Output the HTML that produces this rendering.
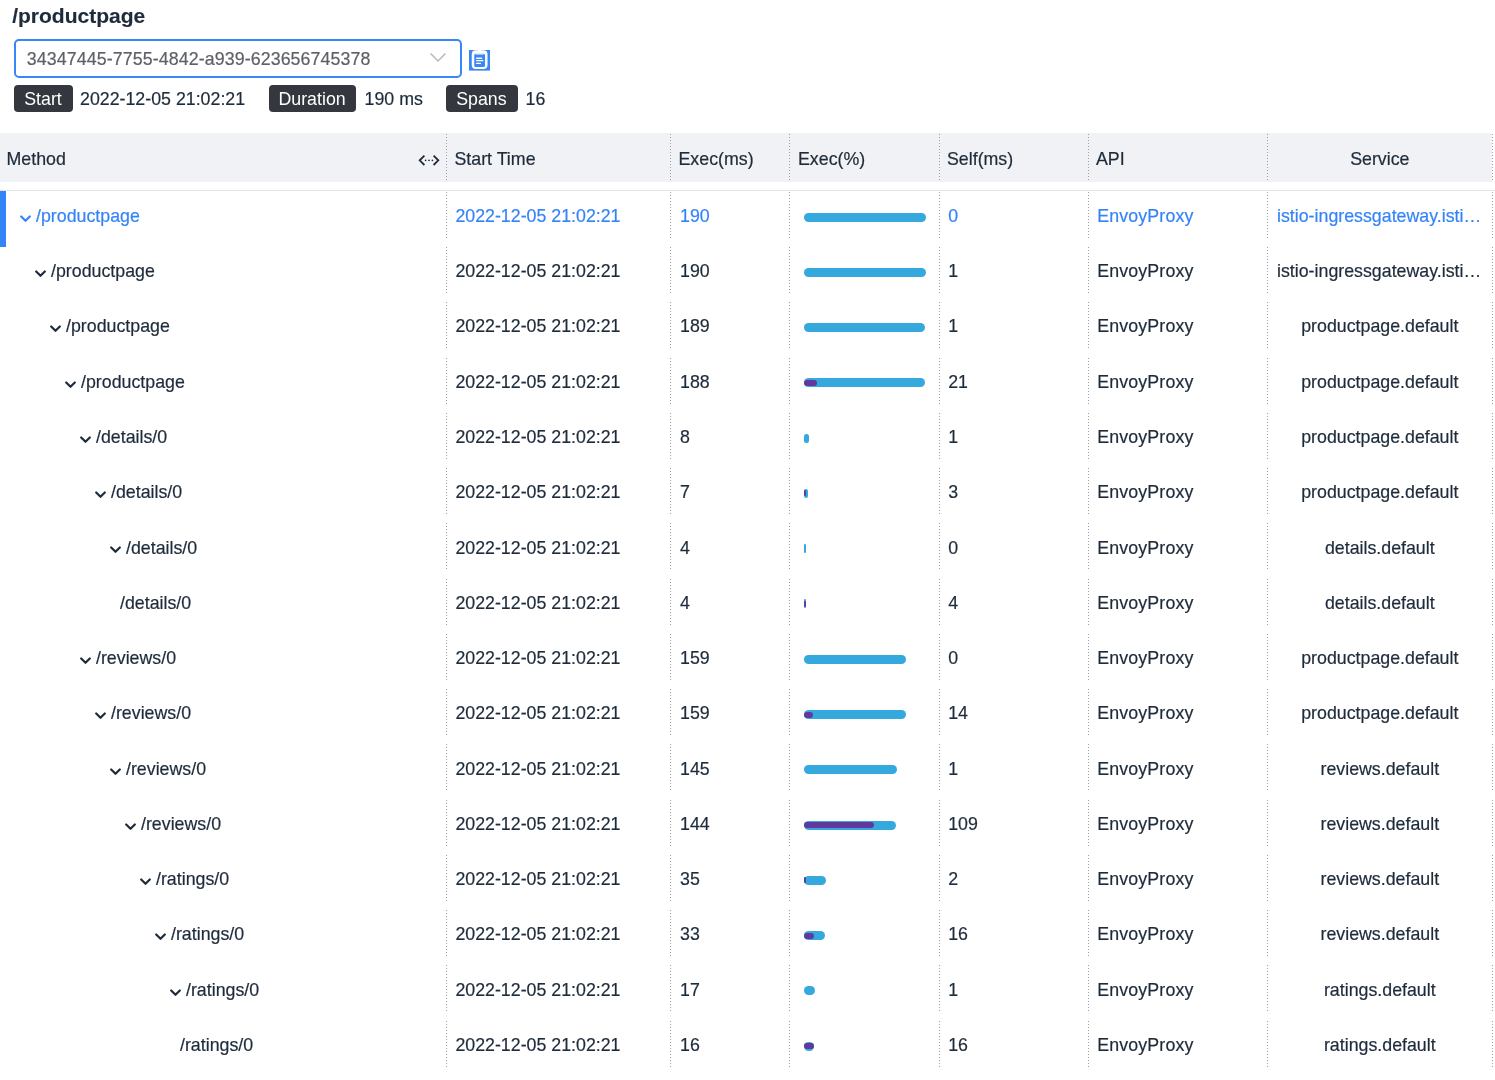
<!DOCTYPE html>
<html><head><meta charset="utf-8"><title>trace</title><style>
*{margin:0;padding:0;box-sizing:border-box}
html,body{-webkit-font-smoothing:antialiased;width:1495px;height:1080px;overflow:hidden;background:#fff;font-family:"Liberation Sans",sans-serif;color:#1d2b3a}
.a{position:absolute;white-space:nowrap}
.t{position:absolute;white-space:nowrap;font-size:17.8px;line-height:20px;-webkit-text-stroke:0.2px currentColor}
.title{position:absolute;left:12.2px;top:4.4px;-webkit-text-stroke:0.15px currentColor;font-size:21px;font-weight:bold;line-height:24px}
.sel{position:absolute;left:14px;top:39px;width:447.5px;height:38.7px;border:2px solid #3a86f6;border-radius:5px;background:#fff}
.tag{position:absolute;top:85.3px;height:26.9px;background:#34383e;border-radius:4px;color:#fff;font-size:17.8px;line-height:28.6px;text-align:center;text-indent:-1px}
.hdr{position:absolute;left:0;top:133.2px;width:1492px;height:49.3px;background:#f0f2f6}
.hline{position:absolute;left:0;top:189.7px;width:1495px;height:1.4px;background:#e2e4e9}
.sep{position:absolute;width:1px;background:repeating-linear-gradient(to bottom,#9c9fa6 0 1px,transparent 1px 3px)}
.bar{position:absolute;height:9px;border-radius:4.5px;background:#35a8de}
.pur{position:absolute;height:6px;border-radius:3px;background:#62389e}
.chev{position:absolute;width:11px;height:8px}
</style></head>
<body><div id="w" style="position:absolute;left:0;top:0;width:1495px;height:1080px;will-change:transform">
<div class="title">/productpage</div>
<div class="sel"></div>
<div class="t" style="left:26.80px;top:48.50px;color:#5e6068;letter-spacing:0.1px">34347445-7755-4842-a939-623656745378</div>
<svg class="a" style="left:429px;top:52px" width="18" height="11" viewBox="0 0 18 11"><path d="M1.6 1.4 L9 9 L16.4 1.4" fill="none" stroke="#b4b7bd" stroke-width="1.5"/></svg>
<svg class="a" style="left:469px;top:50px" width="21" height="21" viewBox="0 0 21 21"><rect x="0" y="0" width="21" height="20.6" fill="#3a86f6"/><path fill="#fff" fill-rule="evenodd" d="M6.5 0.3 H14.5 A4 4 0 0 1 18.5 4.3 V15 A4 4 0 0 1 14.5 19 H6.75 A4 4 0 0 1 2.75 15 V4.3 A4 4 0 0 1 6.5 0.3 Z M6.75 3.75 H14.5 A1.5 1.5 0 0 1 16 5.25 V15.5 A1.5 1.5 0 0 1 14.5 17 H6.75 A1.5 1.5 0 0 1 5.25 15.5 V5.25 A1.5 1.5 0 0 1 6.75 3.75 Z"/><rect x="9" y="0" width="3.25" height="1.2" fill="#fff"/><rect x="6.6" y="3.6" width="8" height="0.9" fill="#fff"/><rect x="7" y="7.5" width="6.25" height="1.5" rx="0.7" fill="#fff"/><rect x="7" y="10" width="7.5" height="1.3" rx="0.6" fill="#fff"/><rect x="7" y="12.75" width="5" height="1.3" rx="0.6" fill="#fff"/></svg>
<div class="tag" style="left:14.2px;width:58.7px">Start</div>
<div class="t" style="left:80.00px;top:88.90px;">2022-12-05 21:02:21</div>
<div class="tag" style="left:268.7px;width:87.8px">Duration</div>
<div class="t" style="left:364.60px;top:88.90px;">190 ms</div>
<div class="tag" style="left:446px;width:71.8px">Spans</div>
<div class="t" style="left:525.50px;top:88.90px;">16</div>
<div class="hdr"></div>
<div class="hline"></div>
<div class="t" style="left:6.50px;top:148.80px;">Method</div>
<svg class="a" style="left:418px;top:154px" width="22" height="13" viewBox="0 0 22 13"><path d="M6.4 1.6 L1.7 6.3 L6.4 11 M15.6 1.6 L20.3 6.3 L15.6 11" fill="none" stroke="#1d2b3a" stroke-width="1.8"/><circle cx="7.6" cy="6.3" r="0.85" fill="#1d2b3a"/><circle cx="11" cy="6.3" r="0.85" fill="#1d2b3a"/><circle cx="14.4" cy="6.3" r="0.85" fill="#1d2b3a"/></svg>
<div class="t" style="left:454.50px;top:148.80px;">Start Time</div>
<div class="t" style="left:678.50px;top:148.80px;">Exec(ms)</div>
<div class="t" style="left:798.00px;top:148.80px;">Exec(%)</div>
<div class="t" style="left:947.00px;top:148.80px;">Self(ms)</div>
<div class="t" style="left:1096.00px;top:148.80px;">API</div>
<div class="t" style="left:1267.5px;width:224.6px;text-align:center;top:148.80px">Service</div>
<div class="sep" style="left:445.50px;top:134px;height:48px"></div>
<div class="sep" style="left:669.60px;top:134px;height:48px"></div>
<div class="sep" style="left:789.20px;top:134px;height:48px"></div>
<div class="sep" style="left:938.50px;top:134px;height:48px"></div>
<div class="sep" style="left:1088.10px;top:134px;height:48px"></div>
<div class="sep" style="left:1267.00px;top:134px;height:48px"></div>
<div class="sep" style="left:1491.60px;top:134px;height:48px"></div>
<div class="a" style="left:0;top:191.00px;width:6px;height:55.5px;background:#3584f7"></div>
<svg class="chev" style="left:20.00px;top:214.80px" viewBox="0 0 11 8"><path d="M1.2 1.5 L5.5 5.8 L9.8 1.5" fill="none" stroke="#3584f7" stroke-width="2.2" stroke-linejoin="round" stroke-linecap="round"/></svg>
<div class="t" style="left:36.00px;top:205.90px;color:#3584f7">/productpage</div>
<div class="t" style="left:455.40px;top:205.90px;color:#3584f7">2022-12-05 21:02:21</div>
<div class="t" style="left:680.00px;top:205.90px;color:#3584f7">190</div>
<div class="t" style="left:948.20px;top:205.90px;color:#3584f7">0</div>
<div class="t" style="left:1097.20px;top:205.90px;color:#3584f7;letter-spacing:0.15px">EnvoyProxy</div>
<div class="t" style="left:1277.00px;top:205.90px;color:#3584f7">istio-ingressgateway.isti…</div>
<div class="bar" style="left:803.7px;top:212.60px;width:122.40px"></div>
<div class="sep" style="left:445.50px;top:191.70px;height:47.5px"></div>
<div class="sep" style="left:669.60px;top:191.70px;height:47.5px"></div>
<div class="sep" style="left:789.20px;top:191.70px;height:47.5px"></div>
<div class="sep" style="left:938.50px;top:191.70px;height:47.5px"></div>
<div class="sep" style="left:1088.10px;top:191.70px;height:47.5px"></div>
<div class="sep" style="left:1267.00px;top:191.70px;height:47.5px"></div>
<div class="sep" style="left:1491.60px;top:191.70px;height:47.5px"></div>
<svg class="chev" style="left:35.00px;top:270.07px" viewBox="0 0 11 8"><path d="M1.2 1.5 L5.5 5.8 L9.8 1.5" fill="none" stroke="#1d2b3a" stroke-width="2.2" stroke-linejoin="round" stroke-linecap="round"/></svg>
<div class="t" style="left:51.00px;top:261.17px;color:#1d2b3a">/productpage</div>
<div class="t" style="left:455.40px;top:261.17px;color:#1d2b3a">2022-12-05 21:02:21</div>
<div class="t" style="left:680.00px;top:261.17px;color:#1d2b3a">190</div>
<div class="t" style="left:948.20px;top:261.17px;color:#1d2b3a">1</div>
<div class="t" style="left:1097.20px;top:261.17px;color:#1d2b3a;letter-spacing:0.15px">EnvoyProxy</div>
<div class="t" style="left:1277.00px;top:261.17px;color:#1d2b3a">istio-ingressgateway.isti…</div>
<div class="bar" style="left:803.7px;top:267.87px;width:122.40px"></div>
<div class="sep" style="left:445.50px;top:246.97px;height:47.5px"></div>
<div class="sep" style="left:669.60px;top:246.97px;height:47.5px"></div>
<div class="sep" style="left:789.20px;top:246.97px;height:47.5px"></div>
<div class="sep" style="left:938.50px;top:246.97px;height:47.5px"></div>
<div class="sep" style="left:1088.10px;top:246.97px;height:47.5px"></div>
<div class="sep" style="left:1267.00px;top:246.97px;height:47.5px"></div>
<div class="sep" style="left:1491.60px;top:246.97px;height:47.5px"></div>
<svg class="chev" style="left:50.00px;top:325.34px" viewBox="0 0 11 8"><path d="M1.2 1.5 L5.5 5.8 L9.8 1.5" fill="none" stroke="#1d2b3a" stroke-width="2.2" stroke-linejoin="round" stroke-linecap="round"/></svg>
<div class="t" style="left:66.00px;top:316.44px;color:#1d2b3a">/productpage</div>
<div class="t" style="left:455.40px;top:316.44px;color:#1d2b3a">2022-12-05 21:02:21</div>
<div class="t" style="left:680.00px;top:316.44px;color:#1d2b3a">189</div>
<div class="t" style="left:948.20px;top:316.44px;color:#1d2b3a">1</div>
<div class="t" style="left:1097.20px;top:316.44px;color:#1d2b3a;letter-spacing:0.15px">EnvoyProxy</div>
<div class="t" style="left:1267.5px;width:224.6px;text-align:center;top:316.44px;color:#1d2b3a">productpage.default</div>
<div class="bar" style="left:803.7px;top:323.14px;width:121.76px"></div>
<div class="sep" style="left:445.50px;top:302.24px;height:47.5px"></div>
<div class="sep" style="left:669.60px;top:302.24px;height:47.5px"></div>
<div class="sep" style="left:789.20px;top:302.24px;height:47.5px"></div>
<div class="sep" style="left:938.50px;top:302.24px;height:47.5px"></div>
<div class="sep" style="left:1088.10px;top:302.24px;height:47.5px"></div>
<div class="sep" style="left:1267.00px;top:302.24px;height:47.5px"></div>
<div class="sep" style="left:1491.60px;top:302.24px;height:47.5px"></div>
<svg class="chev" style="left:65.00px;top:380.61px" viewBox="0 0 11 8"><path d="M1.2 1.5 L5.5 5.8 L9.8 1.5" fill="none" stroke="#1d2b3a" stroke-width="2.2" stroke-linejoin="round" stroke-linecap="round"/></svg>
<div class="t" style="left:81.00px;top:371.71px;color:#1d2b3a">/productpage</div>
<div class="t" style="left:455.40px;top:371.71px;color:#1d2b3a">2022-12-05 21:02:21</div>
<div class="t" style="left:680.00px;top:371.71px;color:#1d2b3a">188</div>
<div class="t" style="left:948.20px;top:371.71px;color:#1d2b3a">21</div>
<div class="t" style="left:1097.20px;top:371.71px;color:#1d2b3a;letter-spacing:0.15px">EnvoyProxy</div>
<div class="t" style="left:1267.5px;width:224.6px;text-align:center;top:371.71px;color:#1d2b3a">productpage.default</div>
<div class="bar" style="left:803.7px;top:378.41px;width:121.11px"></div>
<div class="pur" style="left:803.7px;top:379.91px;width:13.53px"></div>
<div class="sep" style="left:445.50px;top:357.51px;height:47.5px"></div>
<div class="sep" style="left:669.60px;top:357.51px;height:47.5px"></div>
<div class="sep" style="left:789.20px;top:357.51px;height:47.5px"></div>
<div class="sep" style="left:938.50px;top:357.51px;height:47.5px"></div>
<div class="sep" style="left:1088.10px;top:357.51px;height:47.5px"></div>
<div class="sep" style="left:1267.00px;top:357.51px;height:47.5px"></div>
<div class="sep" style="left:1491.60px;top:357.51px;height:47.5px"></div>
<svg class="chev" style="left:80.00px;top:435.88px" viewBox="0 0 11 8"><path d="M1.2 1.5 L5.5 5.8 L9.8 1.5" fill="none" stroke="#1d2b3a" stroke-width="2.2" stroke-linejoin="round" stroke-linecap="round"/></svg>
<div class="t" style="left:96.00px;top:426.98px;color:#1d2b3a">/details/0</div>
<div class="t" style="left:455.40px;top:426.98px;color:#1d2b3a">2022-12-05 21:02:21</div>
<div class="t" style="left:680.00px;top:426.98px;color:#1d2b3a">8</div>
<div class="t" style="left:948.20px;top:426.98px;color:#1d2b3a">1</div>
<div class="t" style="left:1097.20px;top:426.98px;color:#1d2b3a;letter-spacing:0.15px">EnvoyProxy</div>
<div class="t" style="left:1267.5px;width:224.6px;text-align:center;top:426.98px;color:#1d2b3a">productpage.default</div>
<div class="bar" style="left:803.7px;top:433.68px;width:5.15px"></div>
<div class="sep" style="left:445.50px;top:412.78px;height:47.5px"></div>
<div class="sep" style="left:669.60px;top:412.78px;height:47.5px"></div>
<div class="sep" style="left:789.20px;top:412.78px;height:47.5px"></div>
<div class="sep" style="left:938.50px;top:412.78px;height:47.5px"></div>
<div class="sep" style="left:1088.10px;top:412.78px;height:47.5px"></div>
<div class="sep" style="left:1267.00px;top:412.78px;height:47.5px"></div>
<div class="sep" style="left:1491.60px;top:412.78px;height:47.5px"></div>
<svg class="chev" style="left:95.00px;top:491.15px" viewBox="0 0 11 8"><path d="M1.2 1.5 L5.5 5.8 L9.8 1.5" fill="none" stroke="#1d2b3a" stroke-width="2.2" stroke-linejoin="round" stroke-linecap="round"/></svg>
<div class="t" style="left:111.00px;top:482.25px;color:#1d2b3a">/details/0</div>
<div class="t" style="left:455.40px;top:482.25px;color:#1d2b3a">2022-12-05 21:02:21</div>
<div class="t" style="left:680.00px;top:482.25px;color:#1d2b3a">7</div>
<div class="t" style="left:948.20px;top:482.25px;color:#1d2b3a">3</div>
<div class="t" style="left:1097.20px;top:482.25px;color:#1d2b3a;letter-spacing:0.15px">EnvoyProxy</div>
<div class="t" style="left:1267.5px;width:224.6px;text-align:center;top:482.25px;color:#1d2b3a">productpage.default</div>
<div class="bar" style="left:803.7px;top:488.95px;width:4.51px"></div>
<div class="pur" style="left:803.7px;top:490.45px;width:2.50px"></div>
<div class="sep" style="left:445.50px;top:468.05px;height:47.5px"></div>
<div class="sep" style="left:669.60px;top:468.05px;height:47.5px"></div>
<div class="sep" style="left:789.20px;top:468.05px;height:47.5px"></div>
<div class="sep" style="left:938.50px;top:468.05px;height:47.5px"></div>
<div class="sep" style="left:1088.10px;top:468.05px;height:47.5px"></div>
<div class="sep" style="left:1267.00px;top:468.05px;height:47.5px"></div>
<div class="sep" style="left:1491.60px;top:468.05px;height:47.5px"></div>
<svg class="chev" style="left:110.00px;top:546.42px" viewBox="0 0 11 8"><path d="M1.2 1.5 L5.5 5.8 L9.8 1.5" fill="none" stroke="#1d2b3a" stroke-width="2.2" stroke-linejoin="round" stroke-linecap="round"/></svg>
<div class="t" style="left:126.00px;top:537.52px;color:#1d2b3a">/details/0</div>
<div class="t" style="left:455.40px;top:537.52px;color:#1d2b3a">2022-12-05 21:02:21</div>
<div class="t" style="left:680.00px;top:537.52px;color:#1d2b3a">4</div>
<div class="t" style="left:948.20px;top:537.52px;color:#1d2b3a">0</div>
<div class="t" style="left:1097.20px;top:537.52px;color:#1d2b3a;letter-spacing:0.15px">EnvoyProxy</div>
<div class="t" style="left:1267.5px;width:224.6px;text-align:center;top:537.52px;color:#1d2b3a">details.default</div>
<div class="bar" style="left:803.7px;top:544.22px;width:2.58px"></div>
<div class="sep" style="left:445.50px;top:523.32px;height:47.5px"></div>
<div class="sep" style="left:669.60px;top:523.32px;height:47.5px"></div>
<div class="sep" style="left:789.20px;top:523.32px;height:47.5px"></div>
<div class="sep" style="left:938.50px;top:523.32px;height:47.5px"></div>
<div class="sep" style="left:1088.10px;top:523.32px;height:47.5px"></div>
<div class="sep" style="left:1267.00px;top:523.32px;height:47.5px"></div>
<div class="sep" style="left:1491.60px;top:523.32px;height:47.5px"></div>
<div class="t" style="left:120.00px;top:592.79px;color:#1d2b3a">/details/0</div>
<div class="t" style="left:455.40px;top:592.79px;color:#1d2b3a">2022-12-05 21:02:21</div>
<div class="t" style="left:680.00px;top:592.79px;color:#1d2b3a">4</div>
<div class="t" style="left:948.20px;top:592.79px;color:#1d2b3a">4</div>
<div class="t" style="left:1097.20px;top:592.79px;color:#1d2b3a;letter-spacing:0.15px">EnvoyProxy</div>
<div class="t" style="left:1267.5px;width:224.6px;text-align:center;top:592.79px;color:#1d2b3a">details.default</div>
<div class="bar" style="left:803.7px;top:599.49px;width:2.58px"></div>
<div class="pur" style="left:803.7px;top:600.99px;width:2.58px"></div>
<div class="sep" style="left:445.50px;top:578.59px;height:47.5px"></div>
<div class="sep" style="left:669.60px;top:578.59px;height:47.5px"></div>
<div class="sep" style="left:789.20px;top:578.59px;height:47.5px"></div>
<div class="sep" style="left:938.50px;top:578.59px;height:47.5px"></div>
<div class="sep" style="left:1088.10px;top:578.59px;height:47.5px"></div>
<div class="sep" style="left:1267.00px;top:578.59px;height:47.5px"></div>
<div class="sep" style="left:1491.60px;top:578.59px;height:47.5px"></div>
<svg class="chev" style="left:80.00px;top:656.96px" viewBox="0 0 11 8"><path d="M1.2 1.5 L5.5 5.8 L9.8 1.5" fill="none" stroke="#1d2b3a" stroke-width="2.2" stroke-linejoin="round" stroke-linecap="round"/></svg>
<div class="t" style="left:96.00px;top:648.06px;color:#1d2b3a">/reviews/0</div>
<div class="t" style="left:455.40px;top:648.06px;color:#1d2b3a">2022-12-05 21:02:21</div>
<div class="t" style="left:680.00px;top:648.06px;color:#1d2b3a">159</div>
<div class="t" style="left:948.20px;top:648.06px;color:#1d2b3a">0</div>
<div class="t" style="left:1097.20px;top:648.06px;color:#1d2b3a;letter-spacing:0.15px">EnvoyProxy</div>
<div class="t" style="left:1267.5px;width:224.6px;text-align:center;top:648.06px;color:#1d2b3a">productpage.default</div>
<div class="bar" style="left:803.7px;top:654.76px;width:102.43px"></div>
<div class="sep" style="left:445.50px;top:633.86px;height:47.5px"></div>
<div class="sep" style="left:669.60px;top:633.86px;height:47.5px"></div>
<div class="sep" style="left:789.20px;top:633.86px;height:47.5px"></div>
<div class="sep" style="left:938.50px;top:633.86px;height:47.5px"></div>
<div class="sep" style="left:1088.10px;top:633.86px;height:47.5px"></div>
<div class="sep" style="left:1267.00px;top:633.86px;height:47.5px"></div>
<div class="sep" style="left:1491.60px;top:633.86px;height:47.5px"></div>
<svg class="chev" style="left:95.00px;top:712.23px" viewBox="0 0 11 8"><path d="M1.2 1.5 L5.5 5.8 L9.8 1.5" fill="none" stroke="#1d2b3a" stroke-width="2.2" stroke-linejoin="round" stroke-linecap="round"/></svg>
<div class="t" style="left:111.00px;top:703.33px;color:#1d2b3a">/reviews/0</div>
<div class="t" style="left:455.40px;top:703.33px;color:#1d2b3a">2022-12-05 21:02:21</div>
<div class="t" style="left:680.00px;top:703.33px;color:#1d2b3a">159</div>
<div class="t" style="left:948.20px;top:703.33px;color:#1d2b3a">14</div>
<div class="t" style="left:1097.20px;top:703.33px;color:#1d2b3a;letter-spacing:0.15px">EnvoyProxy</div>
<div class="t" style="left:1267.5px;width:224.6px;text-align:center;top:703.33px;color:#1d2b3a">productpage.default</div>
<div class="bar" style="left:803.7px;top:710.03px;width:102.43px"></div>
<div class="pur" style="left:803.7px;top:711.53px;width:9.02px"></div>
<div class="sep" style="left:445.50px;top:689.13px;height:47.5px"></div>
<div class="sep" style="left:669.60px;top:689.13px;height:47.5px"></div>
<div class="sep" style="left:789.20px;top:689.13px;height:47.5px"></div>
<div class="sep" style="left:938.50px;top:689.13px;height:47.5px"></div>
<div class="sep" style="left:1088.10px;top:689.13px;height:47.5px"></div>
<div class="sep" style="left:1267.00px;top:689.13px;height:47.5px"></div>
<div class="sep" style="left:1491.60px;top:689.13px;height:47.5px"></div>
<svg class="chev" style="left:110.00px;top:767.50px" viewBox="0 0 11 8"><path d="M1.2 1.5 L5.5 5.8 L9.8 1.5" fill="none" stroke="#1d2b3a" stroke-width="2.2" stroke-linejoin="round" stroke-linecap="round"/></svg>
<div class="t" style="left:126.00px;top:758.60px;color:#1d2b3a">/reviews/0</div>
<div class="t" style="left:455.40px;top:758.60px;color:#1d2b3a">2022-12-05 21:02:21</div>
<div class="t" style="left:680.00px;top:758.60px;color:#1d2b3a">145</div>
<div class="t" style="left:948.20px;top:758.60px;color:#1d2b3a">1</div>
<div class="t" style="left:1097.20px;top:758.60px;color:#1d2b3a;letter-spacing:0.15px">EnvoyProxy</div>
<div class="t" style="left:1267.5px;width:224.6px;text-align:center;top:758.60px;color:#1d2b3a">reviews.default</div>
<div class="bar" style="left:803.7px;top:765.30px;width:93.41px"></div>
<div class="sep" style="left:445.50px;top:744.40px;height:47.5px"></div>
<div class="sep" style="left:669.60px;top:744.40px;height:47.5px"></div>
<div class="sep" style="left:789.20px;top:744.40px;height:47.5px"></div>
<div class="sep" style="left:938.50px;top:744.40px;height:47.5px"></div>
<div class="sep" style="left:1088.10px;top:744.40px;height:47.5px"></div>
<div class="sep" style="left:1267.00px;top:744.40px;height:47.5px"></div>
<div class="sep" style="left:1491.60px;top:744.40px;height:47.5px"></div>
<svg class="chev" style="left:125.00px;top:822.77px" viewBox="0 0 11 8"><path d="M1.2 1.5 L5.5 5.8 L9.8 1.5" fill="none" stroke="#1d2b3a" stroke-width="2.2" stroke-linejoin="round" stroke-linecap="round"/></svg>
<div class="t" style="left:141.00px;top:813.87px;color:#1d2b3a">/reviews/0</div>
<div class="t" style="left:455.40px;top:813.87px;color:#1d2b3a">2022-12-05 21:02:21</div>
<div class="t" style="left:680.00px;top:813.87px;color:#1d2b3a">144</div>
<div class="t" style="left:948.20px;top:813.87px;color:#1d2b3a">109</div>
<div class="t" style="left:1097.20px;top:813.87px;color:#1d2b3a;letter-spacing:0.15px">EnvoyProxy</div>
<div class="t" style="left:1267.5px;width:224.6px;text-align:center;top:813.87px;color:#1d2b3a">reviews.default</div>
<div class="bar" style="left:803.7px;top:820.57px;width:92.77px"></div>
<div class="pur" style="left:803.7px;top:822.07px;width:70.22px"></div>
<div class="sep" style="left:445.50px;top:799.67px;height:47.5px"></div>
<div class="sep" style="left:669.60px;top:799.67px;height:47.5px"></div>
<div class="sep" style="left:789.20px;top:799.67px;height:47.5px"></div>
<div class="sep" style="left:938.50px;top:799.67px;height:47.5px"></div>
<div class="sep" style="left:1088.10px;top:799.67px;height:47.5px"></div>
<div class="sep" style="left:1267.00px;top:799.67px;height:47.5px"></div>
<div class="sep" style="left:1491.60px;top:799.67px;height:47.5px"></div>
<svg class="chev" style="left:140.00px;top:878.04px" viewBox="0 0 11 8"><path d="M1.2 1.5 L5.5 5.8 L9.8 1.5" fill="none" stroke="#1d2b3a" stroke-width="2.2" stroke-linejoin="round" stroke-linecap="round"/></svg>
<div class="t" style="left:156.00px;top:869.14px;color:#1d2b3a">/ratings/0</div>
<div class="t" style="left:455.40px;top:869.14px;color:#1d2b3a">2022-12-05 21:02:21</div>
<div class="t" style="left:680.00px;top:869.14px;color:#1d2b3a">35</div>
<div class="t" style="left:948.20px;top:869.14px;color:#1d2b3a">2</div>
<div class="t" style="left:1097.20px;top:869.14px;color:#1d2b3a;letter-spacing:0.15px">EnvoyProxy</div>
<div class="t" style="left:1267.5px;width:224.6px;text-align:center;top:869.14px;color:#1d2b3a">reviews.default</div>
<div class="bar" style="left:803.7px;top:875.84px;width:22.55px"></div>
<div class="pur" style="left:803.7px;top:877.34px;width:2.50px"></div>
<div class="sep" style="left:445.50px;top:854.94px;height:47.5px"></div>
<div class="sep" style="left:669.60px;top:854.94px;height:47.5px"></div>
<div class="sep" style="left:789.20px;top:854.94px;height:47.5px"></div>
<div class="sep" style="left:938.50px;top:854.94px;height:47.5px"></div>
<div class="sep" style="left:1088.10px;top:854.94px;height:47.5px"></div>
<div class="sep" style="left:1267.00px;top:854.94px;height:47.5px"></div>
<div class="sep" style="left:1491.60px;top:854.94px;height:47.5px"></div>
<svg class="chev" style="left:155.00px;top:933.31px" viewBox="0 0 11 8"><path d="M1.2 1.5 L5.5 5.8 L9.8 1.5" fill="none" stroke="#1d2b3a" stroke-width="2.2" stroke-linejoin="round" stroke-linecap="round"/></svg>
<div class="t" style="left:171.00px;top:924.41px;color:#1d2b3a">/ratings/0</div>
<div class="t" style="left:455.40px;top:924.41px;color:#1d2b3a">2022-12-05 21:02:21</div>
<div class="t" style="left:680.00px;top:924.41px;color:#1d2b3a">33</div>
<div class="t" style="left:948.20px;top:924.41px;color:#1d2b3a">16</div>
<div class="t" style="left:1097.20px;top:924.41px;color:#1d2b3a;letter-spacing:0.15px">EnvoyProxy</div>
<div class="t" style="left:1267.5px;width:224.6px;text-align:center;top:924.41px;color:#1d2b3a">reviews.default</div>
<div class="bar" style="left:803.7px;top:931.11px;width:21.26px"></div>
<div class="pur" style="left:803.7px;top:932.61px;width:10.31px"></div>
<div class="sep" style="left:445.50px;top:910.21px;height:47.5px"></div>
<div class="sep" style="left:669.60px;top:910.21px;height:47.5px"></div>
<div class="sep" style="left:789.20px;top:910.21px;height:47.5px"></div>
<div class="sep" style="left:938.50px;top:910.21px;height:47.5px"></div>
<div class="sep" style="left:1088.10px;top:910.21px;height:47.5px"></div>
<div class="sep" style="left:1267.00px;top:910.21px;height:47.5px"></div>
<div class="sep" style="left:1491.60px;top:910.21px;height:47.5px"></div>
<svg class="chev" style="left:170.00px;top:988.58px" viewBox="0 0 11 8"><path d="M1.2 1.5 L5.5 5.8 L9.8 1.5" fill="none" stroke="#1d2b3a" stroke-width="2.2" stroke-linejoin="round" stroke-linecap="round"/></svg>
<div class="t" style="left:186.00px;top:979.68px;color:#1d2b3a">/ratings/0</div>
<div class="t" style="left:455.40px;top:979.68px;color:#1d2b3a">2022-12-05 21:02:21</div>
<div class="t" style="left:680.00px;top:979.68px;color:#1d2b3a">17</div>
<div class="t" style="left:948.20px;top:979.68px;color:#1d2b3a">1</div>
<div class="t" style="left:1097.20px;top:979.68px;color:#1d2b3a;letter-spacing:0.15px">EnvoyProxy</div>
<div class="t" style="left:1267.5px;width:224.6px;text-align:center;top:979.68px;color:#1d2b3a">ratings.default</div>
<div class="bar" style="left:803.7px;top:986.38px;width:10.95px"></div>
<div class="sep" style="left:445.50px;top:965.48px;height:47.5px"></div>
<div class="sep" style="left:669.60px;top:965.48px;height:47.5px"></div>
<div class="sep" style="left:789.20px;top:965.48px;height:47.5px"></div>
<div class="sep" style="left:938.50px;top:965.48px;height:47.5px"></div>
<div class="sep" style="left:1088.10px;top:965.48px;height:47.5px"></div>
<div class="sep" style="left:1267.00px;top:965.48px;height:47.5px"></div>
<div class="sep" style="left:1491.60px;top:965.48px;height:47.5px"></div>
<div class="t" style="left:180.00px;top:1034.95px;color:#1d2b3a">/ratings/0</div>
<div class="t" style="left:455.40px;top:1034.95px;color:#1d2b3a">2022-12-05 21:02:21</div>
<div class="t" style="left:680.00px;top:1034.95px;color:#1d2b3a">16</div>
<div class="t" style="left:948.20px;top:1034.95px;color:#1d2b3a">16</div>
<div class="t" style="left:1097.20px;top:1034.95px;color:#1d2b3a;letter-spacing:0.15px">EnvoyProxy</div>
<div class="t" style="left:1267.5px;width:224.6px;text-align:center;top:1034.95px;color:#1d2b3a">ratings.default</div>
<div class="bar" style="left:803.7px;top:1041.65px;width:10.31px"></div>
<div class="pur" style="left:803.7px;top:1043.15px;width:10.31px"></div>
<div class="sep" style="left:445.50px;top:1020.75px;height:47.5px"></div>
<div class="sep" style="left:669.60px;top:1020.75px;height:47.5px"></div>
<div class="sep" style="left:789.20px;top:1020.75px;height:47.5px"></div>
<div class="sep" style="left:938.50px;top:1020.75px;height:47.5px"></div>
<div class="sep" style="left:1088.10px;top:1020.75px;height:47.5px"></div>
<div class="sep" style="left:1267.00px;top:1020.75px;height:47.5px"></div>
<div class="sep" style="left:1491.60px;top:1020.75px;height:47.5px"></div>
</div></body></html>
